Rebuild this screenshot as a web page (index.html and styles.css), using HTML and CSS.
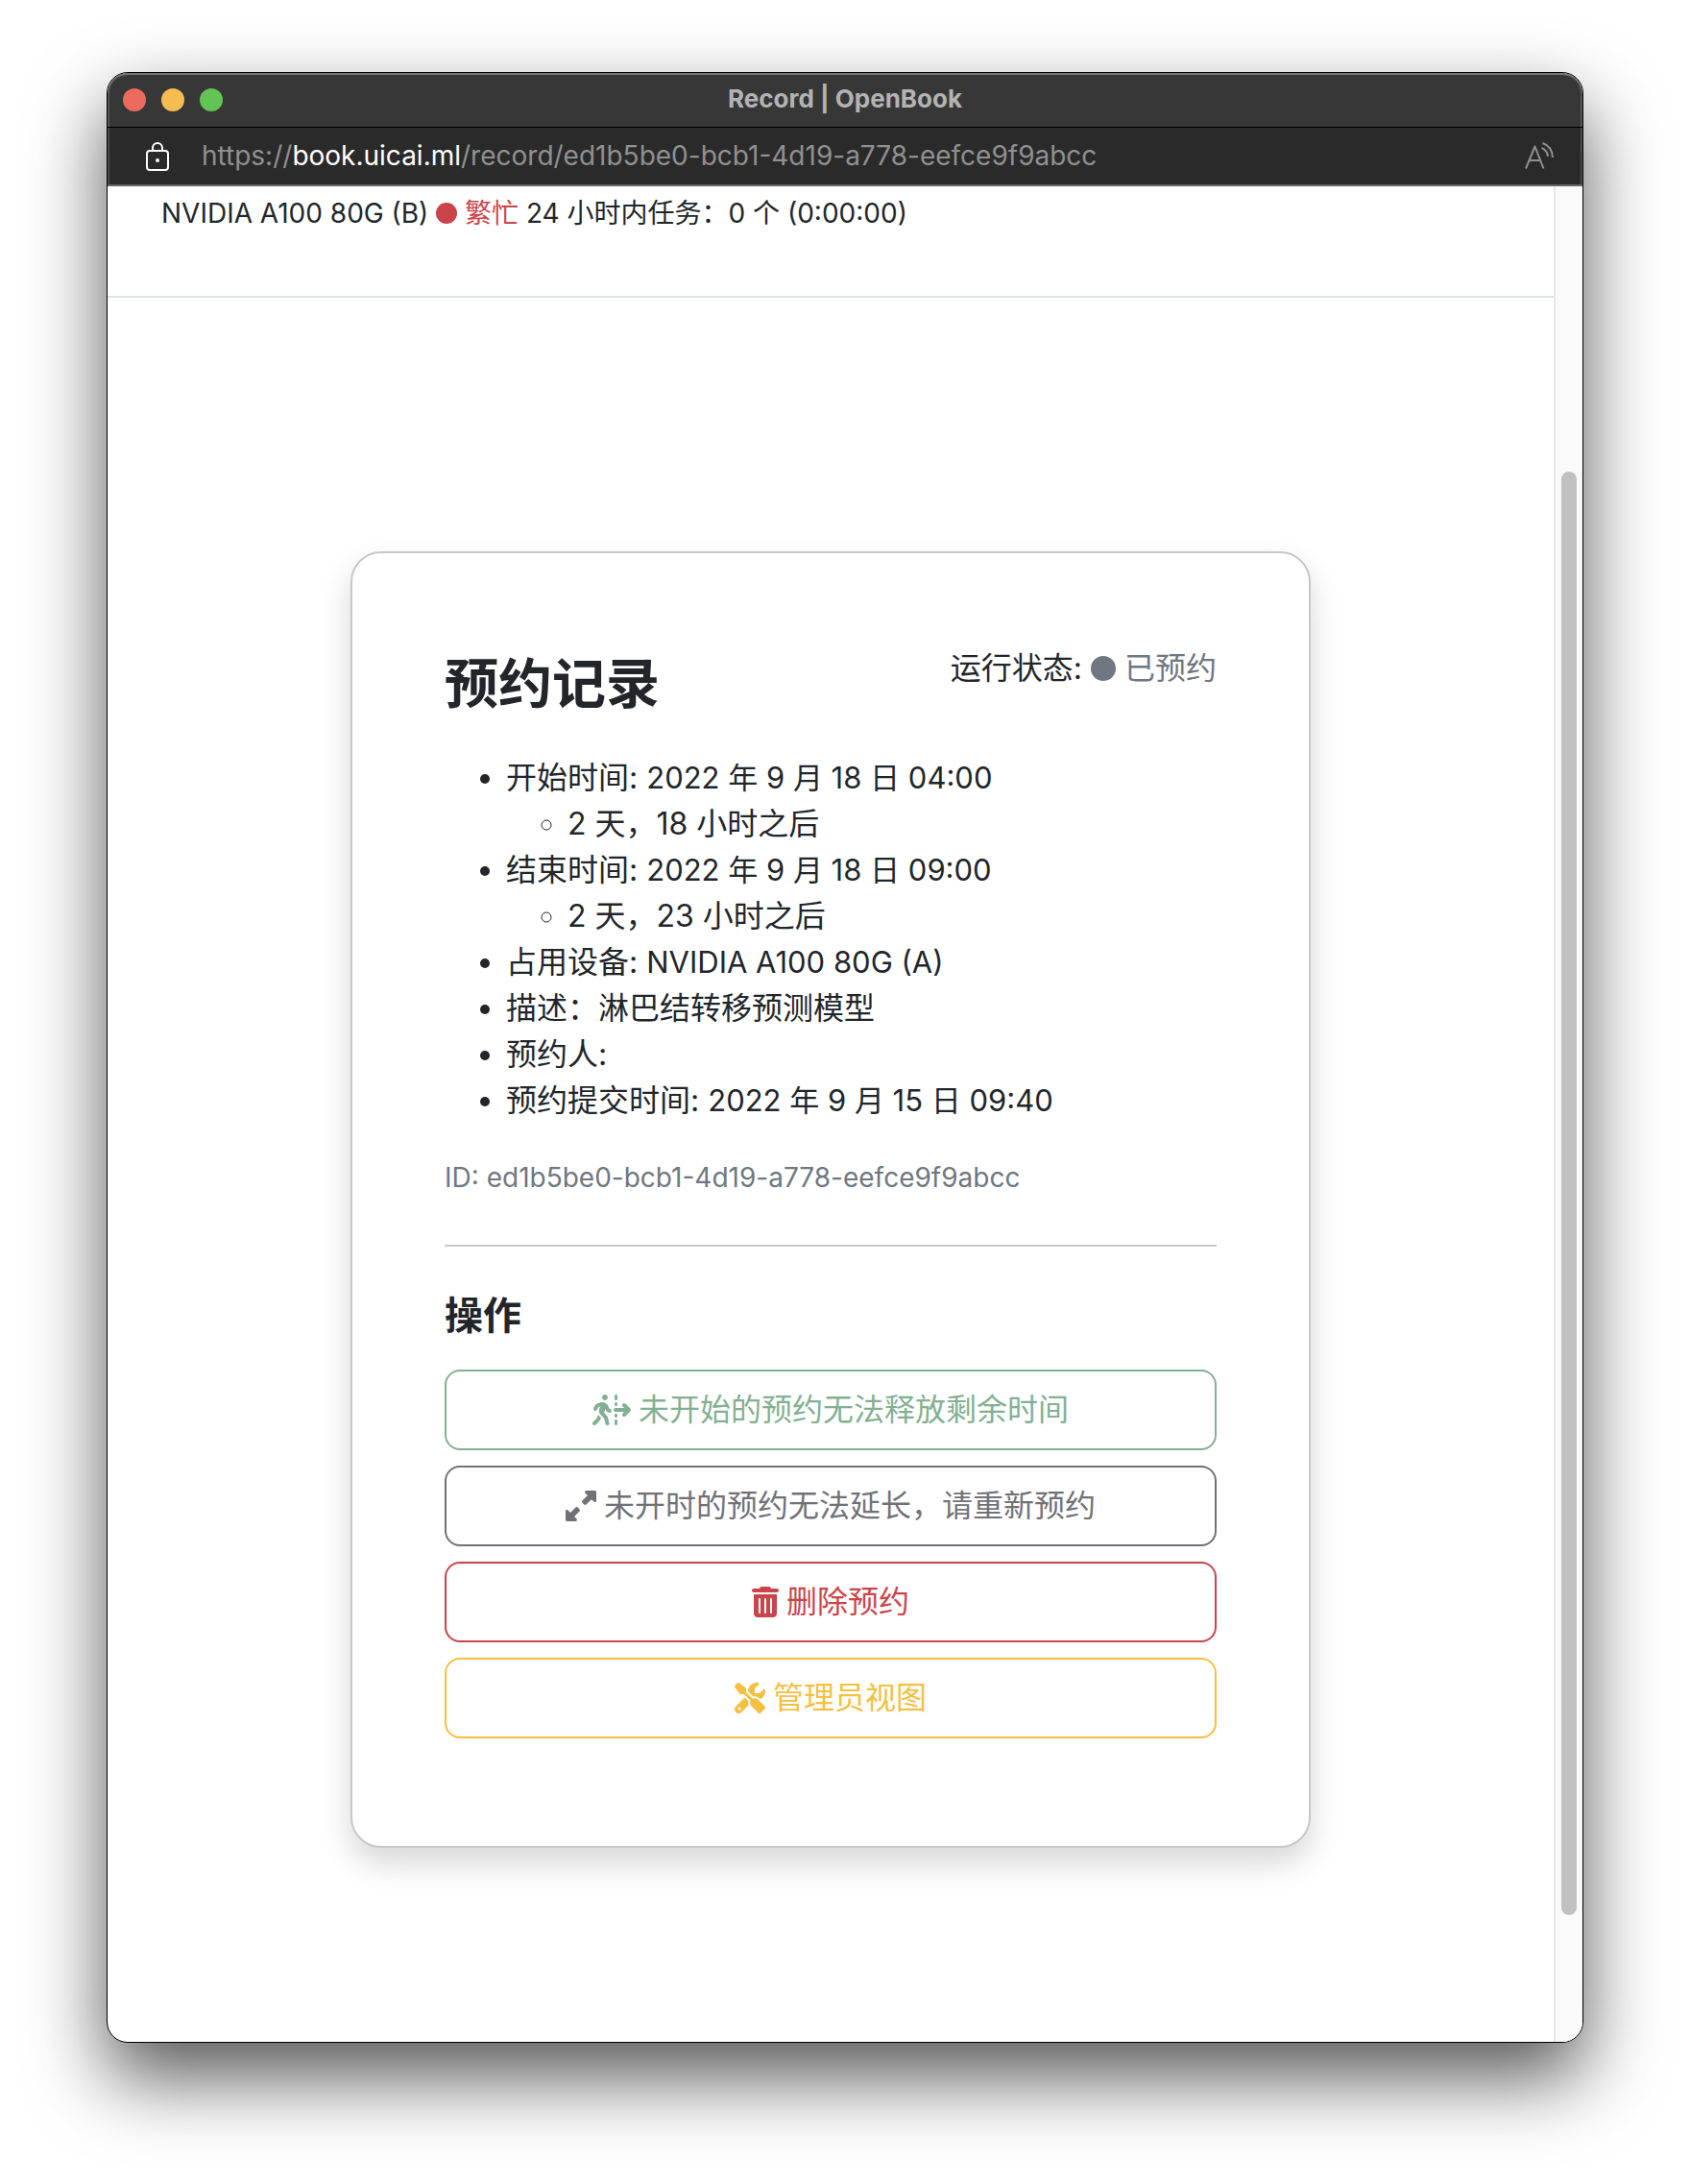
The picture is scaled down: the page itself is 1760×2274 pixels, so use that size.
FILE: index.html
```html
<!DOCTYPE html>
<html lang="zh-CN">
<head>
<meta charset="utf-8">
<meta name="viewport" content="width=device-width, initial-scale=1">
<title>Record | OpenBook</title>
<link rel="stylesheet" href="styles.css">
</head>
<body>
<div class="window">
  <header class="titlebar">
    <div class="lights">
      <span class="light light-close"></span>
      <span class="light light-minimize"></span>
      <span class="light light-zoom"></span>
    </div>
    <div class="window-title">Record | OpenBook</div>
  </header>
  <div class="toolbar">
    <svg class="lock" viewBox="0 0 24 30" aria-hidden="true">
      <rect x="1" y="9" width="22" height="20" rx="3" fill="none" stroke="currentColor" stroke-width="2"/>
      <path d="M7 9V6a5 5 0 0 1 10 0v3" fill="none" stroke="currentColor" stroke-width="2"/>
      <circle cx="12" cy="19" r="2" fill="currentColor"/>
    </svg>
    <div class="url">https://<span class="host">book.uicai.ml</span>/record/ed1b5be0-bcb1-4d19-a778-eefce9f9abcc</div>
    <svg class="read-aloud" viewBox="0 0 30 28" aria-hidden="true">
      <path d="M1 27.500 10.500 4.500 19.500 27.500M4 19H16.500" fill="none" stroke="currentColor" stroke-width="2" stroke-linejoin="round"/>
      <path d="M17.500 6q6 2.500 6.500 9M18.500 1q10 3.500 10.500 15" fill="none" stroke="currentColor" stroke-width="2"/>
    </svg>
  </div>
  <div class="viewport">
    <div class="page">
      <div class="device-row">NVIDIA A100 80G (B) <span class="busy"><span class="dot"></span> 繁忙</span> 24 小时内任务：0 个 (0:00:00)</div>
      <main class="stage">
        <section class="card">
          <div class="card-head">
            <h1>预约记录</h1>
            <div class="status">运行状态: <span class="reserved"><span class="dot"></span> 已预约</span></div>
          </div>
          <ul class="details">
            <li>开始时间: <time class="value" datetime="2022-09-18T04:00">2022 年 9 月 18 日 04:00</time>
              <ul><li>2 天，18 小时之后</li></ul>
            </li>
            <li>结束时间: <time class="value" datetime="2022-09-18T09:00">2022 年 9 月 18 日 09:00</time>
              <ul><li>2 天，23 小时之后</li></ul>
            </li>
            <li>占用设备: <span class="value">NVIDIA A100 80G (A)</span></li>
            <li>描述：淋巴结转移预测模型</li>
            <li>预约人:</li>
            <li>预约提交时间: <time class="value" datetime="2022-09-15T09:40">2022 年 9 月 15 日 09:40</time></li>
          </ul>
          <p class="record-id">ID: ed1b5be0-bcb1-4d19-a778-eefce9f9abcc</p>
          <hr>
          <h2>操作</h2>
          <div class="actions">
            <button class="btn btn-release" type="button" disabled>
              <svg class="icon icon-wide" viewBox="0 0 640 512" aria-hidden="true"><path d="M208 96c26.500 0 48-21.500 48-48S234.500 0 208 0s-48 21.500-48 48s21.500 48 48 48zM123.700 200.500c1-.4 1.900-.8 2.900-1.200l-16.900 63.500c-5.600 21.100-.1 43.600 14.700 59.700l70.700 77.100 22 88.100c4.300 17.100 21.700 27.600 38.800 23.300s27.600-21.700 23.300-38.800l-23-92.100c-1.900-7.800-5.800-14.900-11.200-20.800l-49.500-54 19.300-65.500 9.600 23c4.400 10.600 12.500 19.300 22.800 24.500l26.700 13.300c15.800 7.900 35 1.500 42.900-14.300s1.500-35-14.300-42.900L281 232.700l-15.300-36.800C248.500 154.800 208.300 128 163.700 128c-22.800 0-45.300 4.800-66.100 14l-8 3.500c-32.900 14.600-58.100 42.400-69.400 76.500l-2.600 7.800c-5.600 16.800 3.500 34.900 20.200 40.500s34.900-3.500 40.500-20.200l2.600-7.800c5.700-17.100 18.300-30.900 34.700-38.200l8-3.500zm-30 135.100L68.700 398 9.400 457.400c-12.500 12.500-12.500 32.800 0 45.300s32.800 12.500 45.300 0l62.300-62.300c4.600-4.600 8.200-10.100 10.600-16.100l14.500-36.200-40.700-44.400c-2.500-2.700-4.800-5.600-7-8.600zM550.600 153.400c-12.500-12.500-32.800-12.500-45.300 0s-12.500 32.800 0 45.300L530.700 224H384c-17.700 0-32 14.300-32 32s14.300 32 32 32H530.700l-25.400 25.400c-12.500 12.500-12.500 32.800 0 45.300s32.800 12.500 45.300 0l80-80c12.500-12.500 12.500-32.800 0-45.300l-80-80zM392 0c-13.300 0-24 10.700-24 24V72c0 13.300 10.700 24 24 24s24-10.700 24-24V24c0-13.300-10.700-24-24-24zm24 152c0-13.300-10.700-24-24-24s-24 10.700-24 24v16c0 13.300 10.700 24 24 24s24-10.700 24-24V152zM392 320c-13.300 0-24 10.700-24 24v16c0 13.300 10.700 24 24 24s24-10.700 24-24V344c0-13.300-10.700-24-24-24zm24 120c0-13.300-10.700-24-24-24s-24 10.700-24 24v48c0 13.300 10.700 24 24 24s24-10.700 24-24V440z"/></svg>
              <span>未开始的预约无法释放剩余时间</span>
            </button>
            <button class="btn btn-extend" type="button" disabled>
              <svg class="icon" viewBox="0 0 512 512" aria-hidden="true"><path d="M344 0H488c13.300 0 24 10.700 24 24V168c0 9.700-5.800 18.500-14.800 22.200s-19.300 1.700-26.200-5.200l-39-39-87 87c-9.400 9.400-24.600 9.400-33.900 0l-32-32c-9.400-9.400-9.400-24.600 0-33.900l87-87L327 41c-6.900-6.900-8.900-17.200-5.200-26.200S334.300 0 344 0zM168 512H24c-13.300 0-24-10.700-24-24V344c0-9.700 5.800-18.500 14.800-22.200s19.300-1.700 26.200 5.200l39 39 87-87c9.400-9.400 24.600-9.400 33.900 0l32 32c9.400 9.400 9.400 24.600 0 33.900l-87 87 39 39c6.900 6.900 8.900 17.200 5.200 26.200s-12.500 14.800-22.200 14.800z"/></svg>
              <span>未开时的预约无法延长，请重新预约</span>
            </button>
            <button class="btn btn-delete" type="button">
              <svg class="icon icon-narrow" viewBox="0 0 448 512" aria-hidden="true"><path d="M135.200 17.700C140.600 6.800 151.700 0 163.800 0H284.200c12.100 0 23.200 6.800 28.600 17.700L320 32h96c17.700 0 32 14.300 32 32s-14.300 32-32 32H32C14.300 96 0 81.700 0 64S14.300 32 32 32h96l7.200-14.300zM32 128H416V448c0 35.300-28.700 64-64 64H96c-35.300 0-64-28.700-64-64V128zm96 64c-8.800 0-16 7.200-16 16V432c0 8.800 7.200 16 16 16s16-7.200 16-16V208c0-8.800-7.200-16-16-16zm96 0c-8.800 0-16 7.200-16 16V432c0 8.800 7.200 16 16 16s16-7.200 16-16V208c0-8.800-7.200-16-16-16zm96 0c-8.800 0-16 7.200-16 16V432c0 8.800 7.200 16 16 16s16-7.200 16-16V208c0-8.800-7.200-16-16-16z"/></svg>
              <span>删除预约</span>
            </button>
            <button class="btn btn-admin" type="button">
              <svg class="icon" viewBox="0 0 512 512" aria-hidden="true"><path d="M78.600 5C69.100-2.400 55.600-1.500 47 7L7 47c-8.500 8.500-9.400 22-2.100 31.600l80 104c4.500 5.900 11.600 9.400 19 9.400h54.100l109 109c-14.700 29-10 65.400 14.300 89.600l112 112c12.500 12.500 32.800 12.500 45.300 0l64-64c12.500-12.500 12.500-32.800 0-45.300l-112-112c-24.200-24.200-60.600-29-89.600-14.300l-109-109V104c0-7.500-3.500-14.500-9.400-19L78.600 5zM19.900 396.100C7.200 408.800 0 426.100 0 444.100C0 481.600 30.400 512 67.900 512c18 0 35.300-7.200 48-19.900L233.700 374.300c-7.800-20.900-9-43.600-3.600-65.100l-61.700-61.700L19.900 396.100zM512 144c0-10.500-1.100-20.700-3.200-30.500c-2.400-11.200-16.100-14.100-24.200-6l-63.900 63.900c-3 3-7.100 4.700-11.300 4.700H352c-8.800 0-16-7.200-16-16V102.600c0-4.200 1.700-8.300 4.700-11.300l63.900-63.900c8.100-8.100 5.200-21.800-6-24.200C388.700 1.100 378.500 0 368 0C288.500 0 224 64.500 224 144l0 .8 85.300 85.300c36-9.100 75.800 .5 104 28.700L429 274.500c49-23 83-72.800 83-130.500zM56 432a24 24 0 1 1 48 0 24 24 0 1 1 -48 0z"/></svg>
              <span>管理员视图</span>
            </button>
          </div>
        </section>
      </main>
    </div>
    <div class="scrollbar"><div class="thumb"></div></div>
  </div>
</div>
</body>
</html>
```
FILE: styles.css
```css
* {
  box-sizing: border-box;
}

body {
  display: flex;
  flex-direction: column;
  min-height: 100vh;
  margin: 0;
  padding: 75px 111px 147px;
  background: #fff;
  color: #22262a;
  font-family: Inter, "Noto Sans CJK SC", sans-serif;
  font-size: 32px;
  line-height: 48px;
}

.window {
  display: flex;
  flex: 1;
  flex-direction: column;
  overflow: hidden;
  border: 1px solid #000;
  border-radius: 22px;
  background: #fff;
  box-shadow: 0 36px 80px rgba(0, 0, 0, 0.66);
}

/* Browser chrome */
.titlebar {
  display: grid;
  grid-template-columns: 1fr auto 1fr;
  align-items: center;
  height: 57px;
  padding: 0 16px;
  border-bottom: 1px solid #000;
  border-radius: 21px 21px 0 0;
  background: #373737;
  box-shadow: inset 0 2px #767775, inset 2px 0 #555, inset -2px 0 #555;
}

.lights {
  display: flex;
  gap: 16px;
}

.light {
  width: 24px;
  height: 24px;
  border-radius: 50%;
}

.light-close {
  background: #ed6a5e;
}

.light-minimize {
  background: #f5bd4f;
}

.light-zoom {
  background: #61c454;
}

.window-title {
  padding-bottom: 2px;
  color: #b3b3b3;
  font-size: 26px;
  font-weight: 700;
}

.toolbar {
  display: flex;
  align-items: center;
  height: 61px;
  padding: 0 30px 0 40px;
  border-bottom: 2px solid #666;
  background: #2a2a2a;
  box-shadow: inset 2px 0 #4a4a4a, inset -2px 0 #4a4a4a;
  color: #909090;
  font-size: 28px;
}

.lock {
  width: 24px;
  height: 30px;
  color: #fff;
}

.url {
  flex: 1;
  margin-left: 34px;
  padding-bottom: 2px;
}

.host {
  color: #fff;
}

.read-aloud {
  width: 30px;
  height: 28px;
  margin-bottom: 2px;
}

/* Page area */
.viewport {
  display: flex;
  flex: 1;
}

.page {
  flex: 1;
}

.scrollbar {
  display: grid;
  grid-template-rows: 297fr 1503fr 132fr;
  width: 30px;
  padding: 0 6px;
  border-left: 2px solid #e8e8e8;
  background: #fafafa;
}

.thumb {
  grid-row: 2;
  border-radius: 8px;
  background: #c1c1c1;
}

.device-row {
  height: 116px;
  padding: 7px 56px;
  border-bottom: 2px solid #dee2e6;
  font-size: 28px;
  line-height: 42px;
}

.dot {
  display: inline-block;
  width: 26px;
  height: 26px;
  border-radius: 50%;
  background: currentColor;
  vertical-align: -2px;
}

.device-row .dot {
  width: 22px;
  height: 22px;
  vertical-align: -1px;
}

.busy {
  color: #cb444a;
}

.reserved {
  color: #707780;
}

.stage {
  padding: 264px 32px 202px;
}

.card {
  max-width: 1000px;
  margin: 0 auto;
  padding: 96px 96px 112px;
  border: 2px solid #c8c8c8;
  border-radius: 32px;
  background: #fff;
  box-shadow: 0 16px 32px rgba(0, 0, 0, 0.16);
}

.card-head {
  display: flex;
  justify-content: space-between;
  margin-bottom: 40px;
}

h1 {
  margin: 0;
  padding-top: 6px;
  font-size: 56px;
  line-height: 68px;
}

.details {
  margin: 0 0 32px;
  padding-left: 64px;
}

.details ul {
  margin: 0;
  padding-left: 64px;
}

.value {
  font-size: 31px;
}

.record-id {
  margin: 0;
  color: #707780;
  font-size: 28px;
}

hr {
  height: 2px;
  margin: 46px 0 48px;
  border: 0;
  background: #c8c8c8;
}

h2 {
  margin: 0 0 32px;
  font-size: 40px;
  line-height: 48px;
}

.actions {
  display: grid;
  gap: 16px;
}

.btn {
  display: flex;
  align-items: center;
  justify-content: center;
  gap: 8px;
  padding: 16px 24px;
  border: 2px solid currentColor;
  border-radius: 16px;
  background: #fff;
  font: inherit;
}

.btn-release {
  color: #83b093;
}

.btn-extend {
  color: #717278;
}

.btn-delete {
  color: #cb444a;
}

.btn-admin {
  color: #f5bf42;
}

.icon {
  width: 32px;
  height: 32px;
  fill: currentColor;
}

.icon-wide {
  width: 40px;
}

.icon-narrow {
  width: 28px;
}
```
